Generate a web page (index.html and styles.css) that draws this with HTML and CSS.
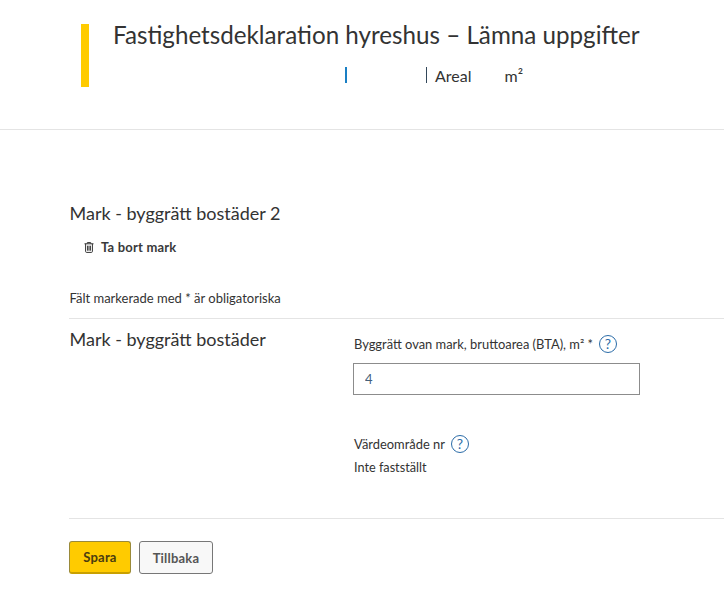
FILE: index.html
```html
<!DOCTYPE html>
<html lang="sv">
<head>
    <meta charset="UTF-8">
    <meta name="viewport" content="width=device-width, initial-scale=1.0">
    <title>Fastighetsdeklaration hyreshus</title>
    <link rel="stylesheet" href="styles.css">
</head>
<body>

<header class="page-header">
    <div class="title-block">
        <h1>Fastighetsdeklaration hyreshus – Lämna uppgifter</h1>
        <div class="meta">
            <span class="meta-mark"></span>
            <span class="meta-sep"></span>
            <span class="meta-area">Areal</span>
            <span class="meta-unit">m²</span>
        </div>
    </div>
</header>

<main class="content">
    <h2 class="mark-title">Mark - byggrätt bostäder 2</h2>

    <a class="remove-link" href="#">
        <svg class="trash" width="10" height="11" viewBox="0 0 10 11">
            <path d="M3.3 1.5V.6h3.4v.9M.5 1.8h9M1.6 1.8v7.7c0 .6.4.9.9.9h5c.5 0 .9-.3.9-.9V1.8" fill="none" stroke="#333" stroke-width="1"/>
            <path d="M3.6 3.7v5M5 3.7v5M6.4 3.7v5" fill="none" stroke="#333" stroke-width="1"/>
        </svg>
        Ta bort mark
    </a>

    <p class="required-note">Fält markerade med * är obligatoriska</p>

    <section class="form-section">
        <h3>Mark - byggrätt bostäder</h3>
        <div class="fields">
            <label class="field-label" for="bta">
                Byggrätt ovan mark, bruttoarea (BTA), m² *
                <span class="help">?</span>
            </label>
            <input class="text-input" type="text" id="bta" value="4">

            <div class="field-label value-label">
                Värdeområde nr
                <span class="help">?</span>
            </div>
            <div class="value-text">Inte fastställt</div>
        </div>
    </section>

    <div class="actions">
        <button class="btn btn-primary">Spara</button>
        <button class="btn">Tillbaka</button>
    </div>
</main>

</body>
</html>
```

FILE: styles.css
```css
body {
    font-family: Lato, "Open Sans", sans-serif;
    margin: 0;
    padding: 0;
    background-color: #fff;
    color: #333;
    overflow: hidden;
}
.page-header {
    height: 130px;
    padding: 24px 0 0 81px;
    border-bottom: 1px solid #e4e4e4;
    box-sizing: border-box;
}
.title-block {
    display: flow-root;
    height: 63px;
    border-left: 8px solid #ffcb00;
    padding-left: 24px;
}
h1 {
    margin: -1px 0 0;
    font-size: 24.2px;
    line-height: 24px;
    font-weight: 400;
}
.meta {
    display: flex;
    align-items: center;
    height: 20px;
    margin-top: 18px;
    font-size: 16px;
}
.meta-mark {
    width: 2px;
    height: 16px;
    margin-left: 232px;
    background-color: #1a7fc4;
}
.meta-sep {
    width: 1px;
    height: 16px;
    margin-left: 79px;
    background-color: #33475a;
}
.meta-area {
    margin-left: 8px;
}
.meta-unit {
    margin-left: 33px;
}
.content {
    padding: 72px 0 0 69.5px;
}
.mark-title {
    margin: 0;
    font-size: 18px;
    line-height: 22px;
    font-weight: 400;
}
.remove-link {
    display: flex;
    align-items: center;
    gap: 7px;
    margin: 15px 0 0 14.5px;
    font-size: 13px;
    line-height: 16px;
    font-weight: 700;
    color: #3a3a3a;
    text-decoration: none;
    letter-spacing: 0.2px;
}
.required-note {
    margin: 35px 0 0;
    font-size: 13px;
    line-height: 16px;
}
.form-section {
    display: flex;
    margin: 12px 0 0 -0.5px;
    padding-top: 10px;
    border-top: 1px solid #e4e4e4;
    height: 201px;
    box-sizing: border-box;
    border-bottom: 1px solid #e4e4e4;
}
h3 {
    margin: 0 0 0 0.5px;
    width: 283.5px;
    font-size: 18px;
    line-height: 20px;
    font-weight: 400;
}
.fields {
    width: 287px;
}
.field-label {
    display: flex;
    align-items: center;
    gap: 6px;
    height: 20px;
    margin-top: 5px;
    font-size: 12.9px;
    padding-left: 1px;
}
.help {
    width: 16px;
    height: 16px;
    border: 1.5px solid #2b6ca8;
    border-radius: 50%;
    color: #2b6ca8;
    font-size: 14px;
    line-height: 16px;
    text-align: center;
}
.text-input {
    display: block;
    width: 100%;
    height: 32px;
    margin-top: 9px;
    padding: 0 11px;
    box-sizing: border-box;
    border: 1px solid #8c8c8c;
    font-family: inherit;
    font-size: 13px;
    color: #44607a;
    outline: none;
}
.value-label {
    margin-top: 39px;
}
.value-text {
    margin-top: 5px;
    padding-left: 1px;
    font-size: 12.7px;
    line-height: 16px;
}
.actions {
    display: flex;
    gap: 8px;
    margin: 22px 0 0 -0.5px;
}
.btn {
    width: 74px;
    height: 33px;
    padding: 0;
    border: 1px solid #777;
    border-radius: 3px;
    background-color: #f8f8f8;
    font-family: inherit;
    font-size: 13px;
    font-weight: 700;
    color: #555;
    letter-spacing: 0.2px;
    cursor: pointer;
}
.btn-primary {
    width: 62px;
    background-color: #ffcb00;
    border-color: #9a8a3a;
    border-bottom: 2px solid #c9a000;
    color: #4a3c10;
}
```
